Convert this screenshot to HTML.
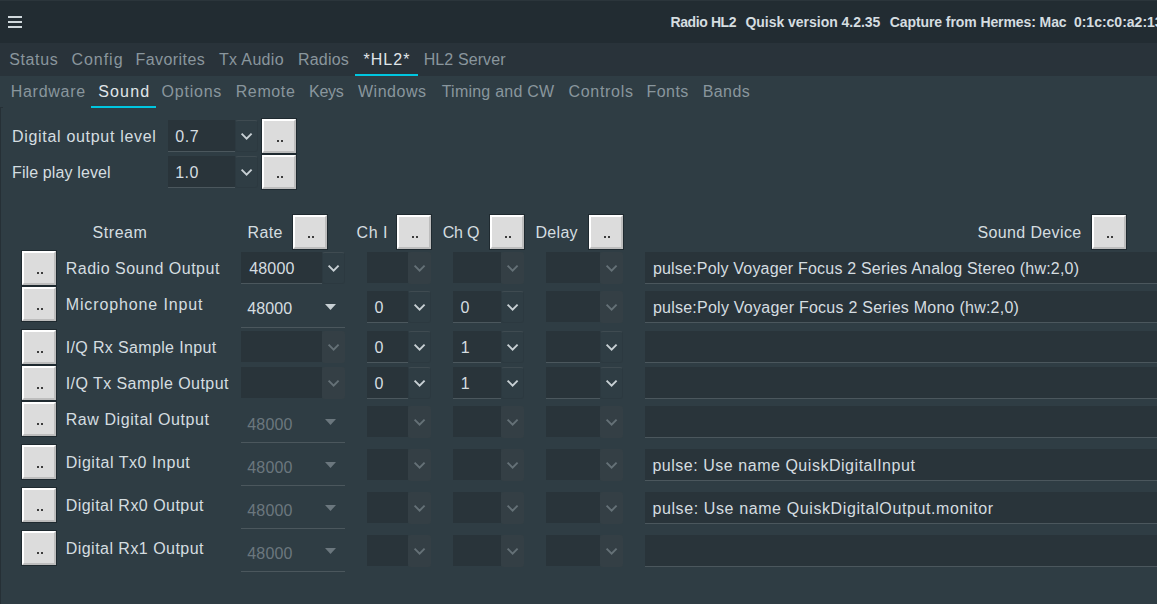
<!DOCTYPE html>
<html><head><meta charset="utf-8"><style>
html,body{margin:0;padding:0;width:1157px;height:604px;overflow:hidden;background:#2f3d44}
body>div,body>span,body>svg{position:absolute}
span{font-family:"Liberation Sans",sans-serif;line-height:20px;white-space:pre}
.b{width:30px;height:30px;background:#dcdcdc;border-style:solid;border-width:2px;border-color:#fff #bdbdbd #bdbdbd #fff;box-shadow:0 0 0 1px #1f2a30}
</style></head><body>
<div style="left:0px;top:0px;width:1157px;height:43px;background:#222c32;"></div>
<div style="left:0px;top:0px;width:1157px;height:1px;background:#2b353b;"></div>
<div style="left:0px;top:43px;width:1157px;height:33px;background:#29333a;"></div>
<div style="left:8px;top:16px;width:14px;height:2px;background:#d0d8dc;"></div>
<div style="left:8px;top:21px;width:14px;height:2px;background:#d0d8dc;"></div>
<div style="left:8px;top:26px;width:14px;height:2px;background:#d0d8dc;"></div>
<div style="left:355px;top:74px;width:63px;height:2px;background:#00c6e0;"></div>
<div style="left:91px;top:106px;width:65px;height:2px;background:#00c6e0;"></div>
<div style="left:0px;top:107px;width:1px;height:497px;background:#263036;"></div>
<div style="left:0px;top:107px;width:3px;height:1px;background:#263036;"></div>
<div style="left:168px;top:120px;width:67px;height:31px;background:#29343a;"></div>
<div style="left:168px;top:151px;width:67px;height:1px;background:#4b575d;"></div>
<div style="left:235px;top:120px;width:21px;height:30px;border:1px solid rgba(0,0,0,0.05);border-top-color:#3f4b51;border-radius:3px;background:#2f3d44"></div>
<svg style="position:absolute;left:239px;top:131px" width="16" height="12"><path d="M2.6 2.6 L7.6 7.6 L12.6 2.6" fill="none" stroke="#c8d0d4" stroke-width="1.9"/></svg>
<div style="left:168px;top:156px;width:67px;height:31px;background:#29343a;"></div>
<div style="left:168px;top:187px;width:67px;height:1px;background:#4b575d;"></div>
<div style="left:235px;top:156px;width:21px;height:30px;border:1px solid rgba(0,0,0,0.05);border-top-color:#3f4b51;border-radius:3px;background:#2f3d44"></div>
<svg style="position:absolute;left:239px;top:167px" width="16" height="12"><path d="M2.6 2.6 L7.6 7.6 L12.6 2.6" fill="none" stroke="#c8d0d4" stroke-width="1.9"/></svg>
<div class="b" style="left:262px;top:119px"></div>
<div style="left:277px;top:140px;width:2px;height:2px;background:#3c3c3c;"></div>
<div style="left:281px;top:140px;width:2px;height:2px;background:#3c3c3c;"></div>
<div class="b" style="left:262px;top:155px"></div>
<div style="left:277px;top:176px;width:2px;height:2px;background:#3c3c3c;"></div>
<div style="left:281px;top:176px;width:2px;height:2px;background:#3c3c3c;"></div>
<div class="b" style="left:293px;top:215px"></div>
<div style="left:308px;top:236px;width:2px;height:2px;background:#3c3c3c;"></div>
<div style="left:312px;top:236px;width:2px;height:2px;background:#3c3c3c;"></div>
<div class="b" style="left:397px;top:215px"></div>
<div style="left:412px;top:236px;width:2px;height:2px;background:#3c3c3c;"></div>
<div style="left:416px;top:236px;width:2px;height:2px;background:#3c3c3c;"></div>
<div class="b" style="left:490px;top:215px"></div>
<div style="left:505px;top:236px;width:2px;height:2px;background:#3c3c3c;"></div>
<div style="left:509px;top:236px;width:2px;height:2px;background:#3c3c3c;"></div>
<div class="b" style="left:589px;top:215px"></div>
<div style="left:604px;top:236px;width:2px;height:2px;background:#3c3c3c;"></div>
<div style="left:608px;top:236px;width:2px;height:2px;background:#3c3c3c;"></div>
<div class="b" style="left:1092px;top:215px"></div>
<div style="left:1107px;top:236px;width:2px;height:2px;background:#3c3c3c;"></div>
<div style="left:1111px;top:236px;width:2px;height:2px;background:#3c3c3c;"></div>
<div class="b" style="left:22px;top:251px"></div>
<div style="left:37px;top:272px;width:2px;height:2px;background:#3c3c3c;"></div>
<div style="left:41px;top:272px;width:2px;height:2px;background:#3c3c3c;"></div>
<div style="left:241px;top:252px;width:81px;height:31px;background:#29343a;"></div>
<div style="left:241px;top:283px;width:81px;height:1px;background:#4b575d;"></div>
<div style="left:322px;top:252px;width:21px;height:30px;border:1px solid rgba(0,0,0,0.05);border-top-color:#3f4b51;border-radius:3px;background:#2f3d44"></div>
<svg style="position:absolute;left:326px;top:263px" width="16" height="12"><path d="M2.6 2.6 L7.6 7.6 L12.6 2.6" fill="none" stroke="#c8d0d4" stroke-width="1.9"/></svg>
<div style="left:367px;top:252px;width:41px;height:31px;background:#29343a;"></div>
<div style="left:408px;top:252px;width:23px;height:32px;border-radius:3px;background:#343f45"></div>
<svg style="position:absolute;left:412px;top:263px" width="16" height="12"><path d="M2.6 2.6 L7.6 7.6 L12.6 2.6" fill="none" stroke="#657177" stroke-width="1.9"/></svg>
<div style="left:453px;top:252px;width:48px;height:31px;background:#29343a;"></div>
<div style="left:501px;top:252px;width:23px;height:32px;border-radius:3px;background:#343f45"></div>
<svg style="position:absolute;left:505px;top:263px" width="16" height="12"><path d="M2.6 2.6 L7.6 7.6 L12.6 2.6" fill="none" stroke="#657177" stroke-width="1.9"/></svg>
<div style="left:546px;top:252px;width:54px;height:31px;background:#29343a;"></div>
<div style="left:600px;top:252px;width:23px;height:32px;border-radius:3px;background:#343f45"></div>
<svg style="position:absolute;left:604px;top:263px" width="16" height="12"><path d="M2.6 2.6 L7.6 7.6 L12.6 2.6" fill="none" stroke="#657177" stroke-width="1.9"/></svg>
<div style="left:645px;top:252px;width:512px;height:31px;background:#29343a;"></div>
<div style="left:645px;top:283px;width:512px;height:1px;background:#4b575d;"></div>
<div class="b" style="left:22px;top:287px"></div>
<div style="left:37px;top:308px;width:2px;height:2px;background:#3c3c3c;"></div>
<div style="left:41px;top:308px;width:2px;height:2px;background:#3c3c3c;"></div>
<div style="left:241px;top:327px;width:104px;height:1px;background:#4b575d;"></div>
<svg style="position:absolute;left:325px;top:304px" width="11" height="6"><path d="M0 0 L11 0 L5.5 6 Z" fill="#c8d0d4"/></svg>
<div style="left:367px;top:291px;width:41px;height:31px;background:#29343a;"></div>
<div style="left:367px;top:322px;width:41px;height:1px;background:#4b575d;"></div>
<div style="left:408px;top:291px;width:21px;height:30px;border:1px solid rgba(0,0,0,0.05);border-top-color:#3f4b51;border-radius:3px;background:#2f3d44"></div>
<svg style="position:absolute;left:412px;top:302px" width="16" height="12"><path d="M2.6 2.6 L7.6 7.6 L12.6 2.6" fill="none" stroke="#c8d0d4" stroke-width="1.9"/></svg>
<div style="left:453px;top:291px;width:48px;height:31px;background:#29343a;"></div>
<div style="left:453px;top:322px;width:48px;height:1px;background:#4b575d;"></div>
<div style="left:501px;top:291px;width:21px;height:30px;border:1px solid rgba(0,0,0,0.05);border-top-color:#3f4b51;border-radius:3px;background:#2f3d44"></div>
<svg style="position:absolute;left:505px;top:302px" width="16" height="12"><path d="M2.6 2.6 L7.6 7.6 L12.6 2.6" fill="none" stroke="#c8d0d4" stroke-width="1.9"/></svg>
<div style="left:546px;top:291px;width:54px;height:31px;background:#29343a;"></div>
<div style="left:600px;top:291px;width:23px;height:32px;border-radius:3px;background:#343f45"></div>
<svg style="position:absolute;left:604px;top:302px" width="16" height="12"><path d="M2.6 2.6 L7.6 7.6 L12.6 2.6" fill="none" stroke="#657177" stroke-width="1.9"/></svg>
<div style="left:645px;top:291px;width:512px;height:31px;background:#29343a;"></div>
<div style="left:645px;top:322px;width:512px;height:1px;background:#4b575d;"></div>
<div class="b" style="left:22px;top:330px"></div>
<div style="left:37px;top:351px;width:2px;height:2px;background:#3c3c3c;"></div>
<div style="left:41px;top:351px;width:2px;height:2px;background:#3c3c3c;"></div>
<div style="left:241px;top:331px;width:81px;height:31px;background:#29343a;"></div>
<div style="left:322px;top:331px;width:23px;height:32px;border-radius:3px;background:#343f45"></div>
<svg style="position:absolute;left:326px;top:342px" width="16" height="12"><path d="M2.6 2.6 L7.6 7.6 L12.6 2.6" fill="none" stroke="#657177" stroke-width="1.9"/></svg>
<div style="left:367px;top:331px;width:41px;height:31px;background:#29343a;"></div>
<div style="left:367px;top:362px;width:41px;height:1px;background:#4b575d;"></div>
<div style="left:408px;top:331px;width:21px;height:30px;border:1px solid rgba(0,0,0,0.05);border-top-color:#3f4b51;border-radius:3px;background:#2f3d44"></div>
<svg style="position:absolute;left:412px;top:342px" width="16" height="12"><path d="M2.6 2.6 L7.6 7.6 L12.6 2.6" fill="none" stroke="#c8d0d4" stroke-width="1.9"/></svg>
<div style="left:453px;top:331px;width:48px;height:31px;background:#29343a;"></div>
<div style="left:453px;top:362px;width:48px;height:1px;background:#4b575d;"></div>
<div style="left:501px;top:331px;width:21px;height:30px;border:1px solid rgba(0,0,0,0.05);border-top-color:#3f4b51;border-radius:3px;background:#2f3d44"></div>
<svg style="position:absolute;left:505px;top:342px" width="16" height="12"><path d="M2.6 2.6 L7.6 7.6 L12.6 2.6" fill="none" stroke="#c8d0d4" stroke-width="1.9"/></svg>
<div style="left:546px;top:331px;width:54px;height:31px;background:#29343a;"></div>
<div style="left:546px;top:362px;width:54px;height:1px;background:#4b575d;"></div>
<div style="left:600px;top:331px;width:21px;height:30px;border:1px solid rgba(0,0,0,0.05);border-top-color:#3f4b51;border-radius:3px;background:#2f3d44"></div>
<svg style="position:absolute;left:604px;top:342px" width="16" height="12"><path d="M2.6 2.6 L7.6 7.6 L12.6 2.6" fill="none" stroke="#c8d0d4" stroke-width="1.9"/></svg>
<div style="left:645px;top:331px;width:512px;height:31px;background:#29343a;"></div>
<div style="left:645px;top:362px;width:512px;height:1px;background:#4b575d;"></div>
<div class="b" style="left:22px;top:366px"></div>
<div style="left:37px;top:387px;width:2px;height:2px;background:#3c3c3c;"></div>
<div style="left:41px;top:387px;width:2px;height:2px;background:#3c3c3c;"></div>
<div style="left:241px;top:367px;width:81px;height:31px;background:#29343a;"></div>
<div style="left:322px;top:367px;width:23px;height:32px;border-radius:3px;background:#343f45"></div>
<svg style="position:absolute;left:326px;top:378px" width="16" height="12"><path d="M2.6 2.6 L7.6 7.6 L12.6 2.6" fill="none" stroke="#657177" stroke-width="1.9"/></svg>
<div style="left:367px;top:367px;width:41px;height:31px;background:#29343a;"></div>
<div style="left:367px;top:398px;width:41px;height:1px;background:#4b575d;"></div>
<div style="left:408px;top:367px;width:21px;height:30px;border:1px solid rgba(0,0,0,0.05);border-top-color:#3f4b51;border-radius:3px;background:#2f3d44"></div>
<svg style="position:absolute;left:412px;top:378px" width="16" height="12"><path d="M2.6 2.6 L7.6 7.6 L12.6 2.6" fill="none" stroke="#c8d0d4" stroke-width="1.9"/></svg>
<div style="left:453px;top:367px;width:48px;height:31px;background:#29343a;"></div>
<div style="left:453px;top:398px;width:48px;height:1px;background:#4b575d;"></div>
<div style="left:501px;top:367px;width:21px;height:30px;border:1px solid rgba(0,0,0,0.05);border-top-color:#3f4b51;border-radius:3px;background:#2f3d44"></div>
<svg style="position:absolute;left:505px;top:378px" width="16" height="12"><path d="M2.6 2.6 L7.6 7.6 L12.6 2.6" fill="none" stroke="#c8d0d4" stroke-width="1.9"/></svg>
<div style="left:546px;top:367px;width:54px;height:31px;background:#29343a;"></div>
<div style="left:546px;top:398px;width:54px;height:1px;background:#4b575d;"></div>
<div style="left:600px;top:367px;width:21px;height:30px;border:1px solid rgba(0,0,0,0.05);border-top-color:#3f4b51;border-radius:3px;background:#2f3d44"></div>
<svg style="position:absolute;left:604px;top:378px" width="16" height="12"><path d="M2.6 2.6 L7.6 7.6 L12.6 2.6" fill="none" stroke="#c8d0d4" stroke-width="1.9"/></svg>
<div style="left:645px;top:367px;width:512px;height:31px;background:#29343a;"></div>
<div style="left:645px;top:398px;width:512px;height:1px;background:#4b575d;"></div>
<div class="b" style="left:22px;top:402px"></div>
<div style="left:37px;top:423px;width:2px;height:2px;background:#3c3c3c;"></div>
<div style="left:41px;top:423px;width:2px;height:2px;background:#3c3c3c;"></div>
<div style="left:241px;top:442px;width:104px;height:1px;background:#4b575d;"></div>
<svg style="position:absolute;left:325px;top:419px" width="11" height="6"><path d="M0 0 L11 0 L5.5 6 Z" fill="#6b777e"/></svg>
<div style="left:367px;top:406px;width:41px;height:31px;background:#29343a;"></div>
<div style="left:408px;top:406px;width:23px;height:32px;border-radius:3px;background:#343f45"></div>
<svg style="position:absolute;left:412px;top:417px" width="16" height="12"><path d="M2.6 2.6 L7.6 7.6 L12.6 2.6" fill="none" stroke="#657177" stroke-width="1.9"/></svg>
<div style="left:453px;top:406px;width:48px;height:31px;background:#29343a;"></div>
<div style="left:501px;top:406px;width:23px;height:32px;border-radius:3px;background:#343f45"></div>
<svg style="position:absolute;left:505px;top:417px" width="16" height="12"><path d="M2.6 2.6 L7.6 7.6 L12.6 2.6" fill="none" stroke="#657177" stroke-width="1.9"/></svg>
<div style="left:546px;top:406px;width:54px;height:31px;background:#29343a;"></div>
<div style="left:600px;top:406px;width:23px;height:32px;border-radius:3px;background:#343f45"></div>
<svg style="position:absolute;left:604px;top:417px" width="16" height="12"><path d="M2.6 2.6 L7.6 7.6 L12.6 2.6" fill="none" stroke="#657177" stroke-width="1.9"/></svg>
<div style="left:645px;top:406px;width:512px;height:31px;background:#29343a;"></div>
<div style="left:645px;top:437px;width:512px;height:1px;background:#4b575d;"></div>
<div class="b" style="left:22px;top:445px"></div>
<div style="left:37px;top:466px;width:2px;height:2px;background:#3c3c3c;"></div>
<div style="left:41px;top:466px;width:2px;height:2px;background:#3c3c3c;"></div>
<div style="left:241px;top:485px;width:104px;height:1px;background:#4b575d;"></div>
<svg style="position:absolute;left:325px;top:462px" width="11" height="6"><path d="M0 0 L11 0 L5.5 6 Z" fill="#6b777e"/></svg>
<div style="left:367px;top:449px;width:41px;height:31px;background:#29343a;"></div>
<div style="left:408px;top:449px;width:23px;height:32px;border-radius:3px;background:#343f45"></div>
<svg style="position:absolute;left:412px;top:460px" width="16" height="12"><path d="M2.6 2.6 L7.6 7.6 L12.6 2.6" fill="none" stroke="#657177" stroke-width="1.9"/></svg>
<div style="left:453px;top:449px;width:48px;height:31px;background:#29343a;"></div>
<div style="left:501px;top:449px;width:23px;height:32px;border-radius:3px;background:#343f45"></div>
<svg style="position:absolute;left:505px;top:460px" width="16" height="12"><path d="M2.6 2.6 L7.6 7.6 L12.6 2.6" fill="none" stroke="#657177" stroke-width="1.9"/></svg>
<div style="left:546px;top:449px;width:54px;height:31px;background:#29343a;"></div>
<div style="left:600px;top:449px;width:23px;height:32px;border-radius:3px;background:#343f45"></div>
<svg style="position:absolute;left:604px;top:460px" width="16" height="12"><path d="M2.6 2.6 L7.6 7.6 L12.6 2.6" fill="none" stroke="#657177" stroke-width="1.9"/></svg>
<div style="left:645px;top:449px;width:512px;height:31px;background:#29343a;"></div>
<div style="left:645px;top:480px;width:512px;height:1px;background:#4b575d;"></div>
<div class="b" style="left:22px;top:488px"></div>
<div style="left:37px;top:509px;width:2px;height:2px;background:#3c3c3c;"></div>
<div style="left:41px;top:509px;width:2px;height:2px;background:#3c3c3c;"></div>
<div style="left:241px;top:528px;width:104px;height:1px;background:#4b575d;"></div>
<svg style="position:absolute;left:325px;top:505px" width="11" height="6"><path d="M0 0 L11 0 L5.5 6 Z" fill="#6b777e"/></svg>
<div style="left:367px;top:492px;width:41px;height:31px;background:#29343a;"></div>
<div style="left:408px;top:492px;width:23px;height:32px;border-radius:3px;background:#343f45"></div>
<svg style="position:absolute;left:412px;top:503px" width="16" height="12"><path d="M2.6 2.6 L7.6 7.6 L12.6 2.6" fill="none" stroke="#657177" stroke-width="1.9"/></svg>
<div style="left:453px;top:492px;width:48px;height:31px;background:#29343a;"></div>
<div style="left:501px;top:492px;width:23px;height:32px;border-radius:3px;background:#343f45"></div>
<svg style="position:absolute;left:505px;top:503px" width="16" height="12"><path d="M2.6 2.6 L7.6 7.6 L12.6 2.6" fill="none" stroke="#657177" stroke-width="1.9"/></svg>
<div style="left:546px;top:492px;width:54px;height:31px;background:#29343a;"></div>
<div style="left:600px;top:492px;width:23px;height:32px;border-radius:3px;background:#343f45"></div>
<svg style="position:absolute;left:604px;top:503px" width="16" height="12"><path d="M2.6 2.6 L7.6 7.6 L12.6 2.6" fill="none" stroke="#657177" stroke-width="1.9"/></svg>
<div style="left:645px;top:492px;width:512px;height:31px;background:#29343a;"></div>
<div style="left:645px;top:523px;width:512px;height:1px;background:#4b575d;"></div>
<div class="b" style="left:22px;top:531px"></div>
<div style="left:37px;top:552px;width:2px;height:2px;background:#3c3c3c;"></div>
<div style="left:41px;top:552px;width:2px;height:2px;background:#3c3c3c;"></div>
<div style="left:241px;top:571px;width:104px;height:1px;background:#4b575d;"></div>
<svg style="position:absolute;left:325px;top:548px" width="11" height="6"><path d="M0 0 L11 0 L5.5 6 Z" fill="#6b777e"/></svg>
<div style="left:367px;top:535px;width:41px;height:31px;background:#29343a;"></div>
<div style="left:408px;top:535px;width:23px;height:32px;border-radius:3px;background:#343f45"></div>
<svg style="position:absolute;left:412px;top:546px" width="16" height="12"><path d="M2.6 2.6 L7.6 7.6 L12.6 2.6" fill="none" stroke="#657177" stroke-width="1.9"/></svg>
<div style="left:453px;top:535px;width:48px;height:31px;background:#29343a;"></div>
<div style="left:501px;top:535px;width:23px;height:32px;border-radius:3px;background:#343f45"></div>
<svg style="position:absolute;left:505px;top:546px" width="16" height="12"><path d="M2.6 2.6 L7.6 7.6 L12.6 2.6" fill="none" stroke="#657177" stroke-width="1.9"/></svg>
<div style="left:546px;top:535px;width:54px;height:31px;background:#29343a;"></div>
<div style="left:600px;top:535px;width:23px;height:32px;border-radius:3px;background:#343f45"></div>
<svg style="position:absolute;left:604px;top:546px" width="16" height="12"><path d="M2.6 2.6 L7.6 7.6 L12.6 2.6" fill="none" stroke="#657177" stroke-width="1.9"/></svg>
<div style="left:645px;top:535px;width:512px;height:31px;background:#29343a;"></div>
<div style="left:645px;top:566px;width:512px;height:1px;background:#4b575d;"></div>
<span style="left:670.50px;top:12px;font-size:14px;font-weight:bold;letter-spacing:-0.400px;color:#d5dde0">Radio HL2</span>
<span style="left:745.40px;top:12px;font-size:14px;font-weight:bold;letter-spacing:-0.021px;color:#d5dde0">Quisk version 4.2.35</span>
<span style="left:889.80px;top:12px;font-size:14px;font-weight:bold;letter-spacing:-0.091px;color:#d5dde0">Capture from Hermes: Mac</span>
<span style="left:1073.90px;top:12px;font-size:14px;font-weight:bold;letter-spacing:0.000px;color:#d5dde0">0:1c:c0:a2:13:b5</span>
<span style="left:9.30px;top:50px;font-size:16px;letter-spacing:0.600px;color:#89969d">Status</span>
<span style="left:71.40px;top:50px;font-size:16px;letter-spacing:0.980px;color:#89969d">Config</span>
<span style="left:135.60px;top:50px;font-size:16px;letter-spacing:0.425px;color:#89969d">Favorites</span>
<span style="left:219.00px;top:50px;font-size:16px;letter-spacing:0.343px;color:#89969d">Tx Audio</span>
<span style="left:298.00px;top:50px;font-size:16px;letter-spacing:0.200px;color:#89969d">Radios</span>
<span style="left:363.50px;top:50px;font-size:16px;letter-spacing:1.025px;color:#e0e6e9">*HL2*</span>
<span style="left:423.70px;top:50px;font-size:16px;letter-spacing:0.100px;color:#89969d">HL2 Server</span>
<span style="left:10.70px;top:82px;font-size:16px;letter-spacing:0.729px;color:#89969d">Hardware</span>
<span style="left:98.30px;top:82px;font-size:16px;letter-spacing:1.125px;color:#e0e6e9">Sound</span>
<span style="left:161.60px;top:82px;font-size:16px;letter-spacing:0.767px;color:#89969d">Options</span>
<span style="left:235.70px;top:82px;font-size:16px;letter-spacing:0.620px;color:#89969d">Remote</span>
<span style="left:309.00px;top:82px;font-size:16px;letter-spacing:-0.267px;color:#89969d">Keys</span>
<span style="left:358.00px;top:82px;font-size:16px;letter-spacing:0.517px;color:#89969d">Windows</span>
<span style="left:441.70px;top:82px;font-size:16px;letter-spacing:0.233px;color:#89969d">Timing and CW</span>
<span style="left:568.50px;top:82px;font-size:16px;letter-spacing:0.686px;color:#89969d">Controls</span>
<span style="left:646.60px;top:82px;font-size:16px;letter-spacing:0.425px;color:#89969d">Fonts</span>
<span style="left:702.80px;top:82px;font-size:16px;letter-spacing:0.375px;color:#89969d">Bands</span>
<span style="left:12.00px;top:127px;font-size:16px;letter-spacing:0.689px;color:#d5dde0">Digital output level</span>
<span style="left:12.00px;top:163px;font-size:16px;letter-spacing:0.121px;color:#d5dde0">File play level</span>
<span style="left:175.20px;top:127px;font-size:16px;letter-spacing:0.600px;color:#d5dde0">0.7</span>
<span style="left:175.20px;top:163px;font-size:16px;letter-spacing:0.500px;color:#d5dde0">1.0</span>
<span style="left:92.50px;top:223px;font-size:16px;letter-spacing:0.560px;color:#d5dde0">Stream</span>
<span style="left:247.50px;top:223px;font-size:16px;letter-spacing:0.367px;color:#d5dde0">Rate</span>
<span style="left:356.60px;top:223px;font-size:16px;letter-spacing:0.500px;color:#d5dde0">Ch I</span>
<span style="left:442.70px;top:223px;font-size:16px;letter-spacing:-0.167px;color:#d5dde0">Ch Q</span>
<span style="left:535.50px;top:223px;font-size:16px;letter-spacing:0.300px;color:#d5dde0">Delay</span>
<span style="left:977.40px;top:223px;font-size:16px;letter-spacing:0.382px;color:#d5dde0">Sound Device</span>
<span style="left:65.70px;top:259px;font-size:16px;letter-spacing:0.512px;color:#d5dde0">Radio Sound Output</span>
<span style="left:65.70px;top:295px;font-size:16px;letter-spacing:0.880px;color:#d5dde0">Microphone Input</span>
<span style="left:65.70px;top:338px;font-size:16px;letter-spacing:0.356px;color:#d5dde0">I/Q Rx Sample Input</span>
<span style="left:65.70px;top:374px;font-size:16px;letter-spacing:0.437px;color:#d5dde0">I/Q Tx Sample Output</span>
<span style="left:65.70px;top:410px;font-size:16px;letter-spacing:0.582px;color:#d5dde0">Raw Digital Output</span>
<span style="left:65.70px;top:453px;font-size:16px;letter-spacing:0.550px;color:#d5dde0">Digital Tx0 Input</span>
<span style="left:65.70px;top:496px;font-size:16px;letter-spacing:0.471px;color:#d5dde0">Digital Rx0 Output</span>
<span style="left:65.70px;top:539px;font-size:16px;letter-spacing:0.471px;color:#d5dde0">Digital Rx1 Output</span>
<span style="left:249.20px;top:259px;font-size:16px;letter-spacing:0.175px;color:#d5dde0">48000</span>
<span style="left:247.30px;top:299px;font-size:16px;letter-spacing:0.075px;color:#d5dde0">48000</span>
<span style="left:247.30px;top:415px;font-size:16px;letter-spacing:0.175px;color:#6b777e">48000</span>
<span style="left:247.30px;top:458px;font-size:16px;letter-spacing:0.175px;color:#6b777e">48000</span>
<span style="left:247.30px;top:501px;font-size:16px;letter-spacing:0.175px;color:#6b777e">48000</span>
<span style="left:247.30px;top:544px;font-size:16px;letter-spacing:0.175px;color:#6b777e">48000</span>
<span style="left:374.40px;top:298px;font-size:16px;letter-spacing:0.000px;color:#d5dde0">0</span>
<span style="left:460.40px;top:298px;font-size:16px;letter-spacing:0.000px;color:#d5dde0">0</span>
<span style="left:374.40px;top:338px;font-size:16px;letter-spacing:0.000px;color:#d5dde0">0</span>
<span style="left:460.80px;top:338px;font-size:16px;letter-spacing:0.000px;color:#d5dde0">1</span>
<span style="left:374.40px;top:374px;font-size:16px;letter-spacing:0.000px;color:#d5dde0">0</span>
<span style="left:460.80px;top:374px;font-size:16px;letter-spacing:0.000px;color:#d5dde0">1</span>
<span style="left:652.90px;top:259px;font-size:16px;letter-spacing:0.196px;color:#d5dde0">pulse:Poly Voyager Focus 2 Series Analog Stereo (hw:2,0)</span>
<span style="left:652.90px;top:298px;font-size:16px;letter-spacing:0.243px;color:#d5dde0">pulse:Poly Voyager Focus 2 Series Mono (hw:2,0)</span>
<span style="left:652.40px;top:456px;font-size:16px;letter-spacing:0.531px;color:#d5dde0">pulse: Use name QuiskDigitalInput</span>
<span style="left:652.40px;top:499px;font-size:16px;letter-spacing:0.610px;color:#d5dde0">pulse: Use name QuiskDigitalOutput.monitor</span>
</body></html>
